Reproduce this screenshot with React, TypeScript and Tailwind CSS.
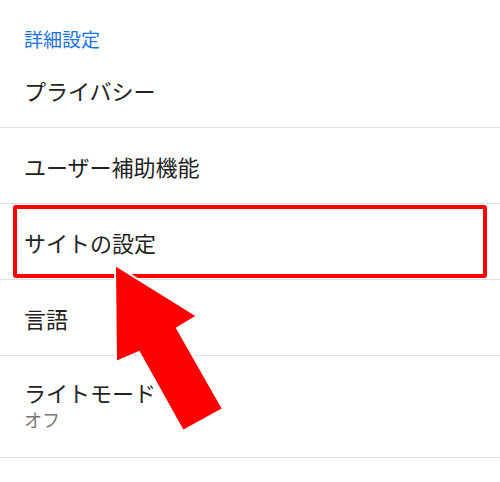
const FONT = "font-['Noto_Sans_CJK_JP','Noto_Sans',sans-serif]"

function Row({ label, sub, highlighted }: { label: string; sub?: string; highlighted?: boolean }) {
  return (
    <div className={`relative flex flex-col justify-center px-6 border-b border-[#e0e0e0] ${sub ? "h-[102px] pb-1" : "h-[76px]"}`}>
      <span className="text-[22px] leading-[28px] text-[#222]">{label}</span>
      {sub && <span className="text-[18px] leading-[26px] text-[#777]">{sub}</span>}
      {highlighted && (
        <div className="absolute left-[13px] right-[13px] top-px bottom-px border-[4px] border-[#ff0000] rounded-[3px]" />
      )}
    </div>
  )
}

export default function App() {
  return (
    <div className={`relative w-[500px] h-[482px] bg-white overflow-hidden ${FONT}`}>
      <div className="h-[52px] px-6 pt-[26px]">
        <span className="text-[19px] leading-[26px] text-[#1a73e8]">詳細設定</span>
      </div>
      <Row label="プライバシー" />
      <Row label="ユーザー補助機能" />
      <Row label="サイトの設定" highlighted />
      <Row label="言語" />
      <Row label="ライトモード" sub="オフ" />

      {/* pointer arrow */}
      <svg className="absolute left-0 top-0" width="500" height="482" viewBox="0 0 500 482">
        <polygon
          points="115,265 197,316 177,328 223,409 183,431 139,352 116,362"
          fill="#ff0000"
          stroke="#ffffff"
          strokeWidth="2"
          strokeLinejoin="miter"
        />
      </svg>
    </div>
  )
}
